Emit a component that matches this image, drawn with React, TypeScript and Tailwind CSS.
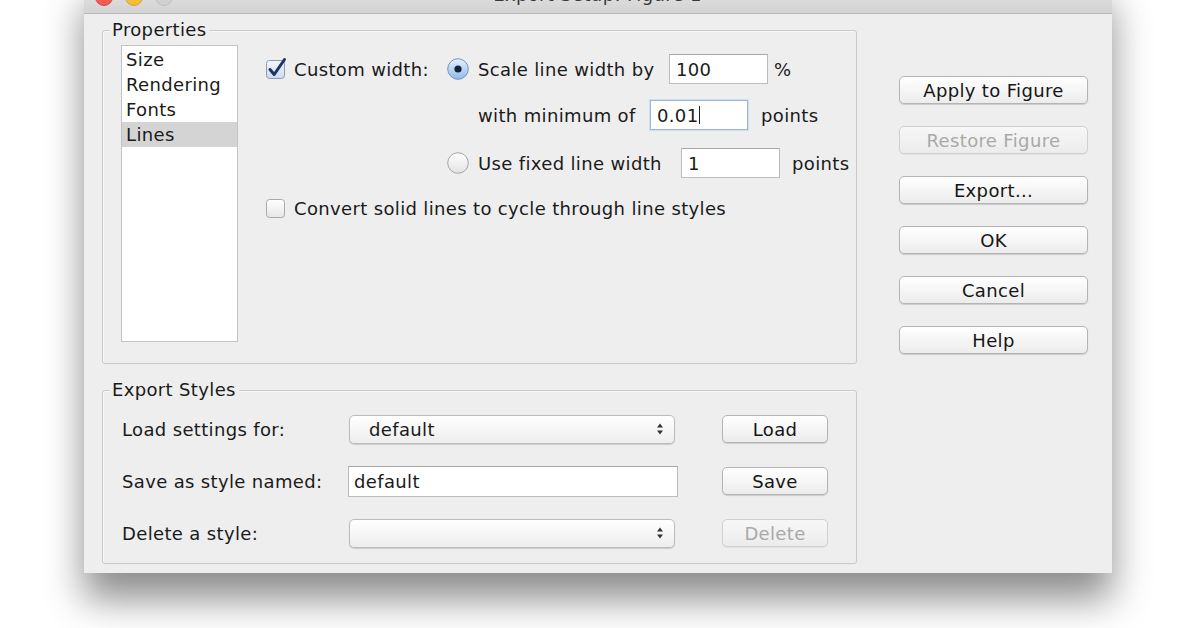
import React from "react";

const font = { fontFamily: '"DejaVu Sans", "Noto Sans", sans-serif' };

function CheckBox({ checked }: { checked: boolean }) {
  return (
    <svg width="24" height="24" viewBox="0 0 24 24" className="shrink-0">
      <defs>
        <linearGradient id={checked ? "cbg1" : "cbg0"} x1="0" y1="0" x2="0" y2="1">
          <stop offset="0" stopColor={checked ? "#f4f8fd" : "#ffffff"} />
          <stop offset="1" stopColor={checked ? "#c9daf0" : "#e6e6e6"} />
        </linearGradient>
      </defs>
      <rect x="2.5" y="3.5" width="18" height="18" rx="3" fill={`url(#${checked ? "cbg1" : "cbg0"})`} stroke={checked ? "#8b9bb4" : "#a9a9a9"} strokeWidth="1" />
      {checked && (
        <path d="M6 12.5 L10.2 17.5 L20.5 2.5" fill="none" stroke="#1d3561" strokeWidth="3" strokeLinecap="round" strokeLinejoin="round" />
      )}
    </svg>
  );
}

function Radio({ checked }: { checked: boolean }) {
  return (
    <svg width="24" height="24" viewBox="0 0 24 24" className="shrink-0">
      <defs>
        <linearGradient id={checked ? "rg1" : "rg0"} x1="0" y1="0" x2="0" y2="1">
          <stop offset="0" stopColor={checked ? "#e4effb" : "#ffffff"} />
          <stop offset="1" stopColor={checked ? "#8fbbe9" : "#e3e3e3"} />
        </linearGradient>
      </defs>
      <circle cx="12" cy="12" r="10.3" fill={`url(#${checked ? "rg1" : "rg0"})`} stroke={checked ? "#7896c0" : "#a6a6a6"} strokeWidth="1" />
      {checked && <circle cx="12" cy="12" r="3.6" fill="#15213a" />}
    </svg>
  );
}

function Field({ value, w, focused, cursor }: { value: string; w: string; focused?: boolean; cursor?: boolean }) {
  return (
    <div
      className={`${w} h-[30px] shrink-0 bg-white flex items-center pl-[6px] border ${
        focused ? "border-[#9fb6d8] shadow-[0_0_0_1px_#cfdcef]" : "border-[#bdbdbd] border-t-[#a8a8a8]"
      }`}
    >
      <span className="text-[#1a1a1a]">{value}</span>
      {cursor && <span className="w-[1px] h-[18px] bg-[#222] ml-[1px]" />}
    </div>
  );
}

function Btn({ label, w, disabled }: { label: string; w: string; disabled?: boolean }) {
  return (
    <div
      className={`${w} h-[28px] rounded-[5px] border flex items-center justify-center bg-gradient-to-b ${
        disabled
          ? "border-[#d0d0d0] from-[#f7f7f7] to-[#ececec] text-[#a9a9a9] shadow-[0_1px_1px_rgba(0,0,0,0.06)]"
          : "border-[#b4b4b4] from-[#ffffff] to-[#ececec] text-[#151515] shadow-[0_1px_1px_rgba(0,0,0,0.15)]"
      }`}
    >
      {label}
    </div>
  );
}

function Select({ value }: { value: string }) {
  return (
    <div className="w-[326px] h-[29px] shrink-0 rounded-[5px] border border-[#bcbcbc] bg-gradient-to-b from-[#ffffff] to-[#ededed] shadow-[0_1px_1px_rgba(0,0,0,0.15)] flex items-center pl-[19px] pr-[10px]">
      <span className="flex-1 text-[#1a1a1a]">{value}</span>
      <svg width="8" height="14" viewBox="0 0 8 14">
        <path d="M1 5.5 L4 1.5 L7 5.5 Z" fill="#333" />
        <path d="M1 8.5 L4 12.5 L7 8.5 Z" fill="#333" />
      </svg>
    </div>
  );
}

function GroupTitle({ text }: { text: string }) {
  return (
    <div className="-mt-[12px] ml-[6px] h-[22px] leading-[22px] w-fit px-[3px] bg-[#eeeeee] text-[#1a1a1a]">{text}</div>
  );
}

export default function App() {
  return (
    <div className="w-[1196px] h-[628px] bg-white overflow-hidden text-[18px] tracking-[0.35px]" style={font}>
      <div className="ml-[84px] w-[1028px] -mt-[22px] bg-[#eeeeee] shadow-[0_26px_36px_rgba(0,0,0,0.45)]">
        {/* Title bar */}
        <div className="h-[36px] bg-gradient-to-b from-[#e8e8e8] to-[#d3d3d3] border-b border-[#b9b9b9] flex items-center px-[10px]">
          <div className="flex items-center gap-[12px] ml-[1px] mt-[2px]">
            <div className="w-[18px] h-[18px] rounded-full bg-[#f25a52] border border-[#d8453e]" />
            <div className="w-[18px] h-[18px] rounded-full bg-[#f6bc3c] border border-[#dca032]" />
            <div className="w-[18px] h-[18px] rounded-full bg-[#d0d0d0] border border-[#bdbdbd]" />
          </div>
          <div className="flex-1 text-center text-[#3a3a3a] pr-[80px] -mt-[2px]">Export Setup: Figure 1</div>
        </div>

        {/* Content */}
        <div className="flex pl-[18px] pt-[16px] pb-[9px]">
          {/* Left column */}
          <div className="w-[755px] shrink-0">
            {/* Properties group */}
            <div className="h-[334px] border border-[#c9c9c9] rounded-[3px] shadow-[inset_1px_1px_0_#f8f8f8]">
              <GroupTitle text="Properties" />
              <div className="flex">
                <div className="ml-[18px] mt-[4px] w-[117px] h-[297px] bg-white border border-[#c4c4c4] pt-[1px] leading-[25px] text-[#1a1a1a]">
                  <div className="pl-[4px]">Size</div>
                  <div className="pl-[4px]">Rendering</div>
                  <div className="pl-[4px]">Fonts</div>
                  <div className="pl-[4px] bg-[#d4d4d4]">Lines</div>
                </div>
                <div className="ml-[26px] mt-[13px] text-[#1a1a1a]">
                  <div className="flex items-center h-[30px]">
                    <div className="w-[182px] flex items-center gap-[6px] shrink-0">
                      <CheckBox checked />
                      <span>Custom width:</span>
                    </div>
                    <Radio checked />
                    <span className="ml-[8px] w-[191px] shrink-0">Scale line width by</span>
                    <Field value="100" w="w-[99px]" />
                    <span className="ml-[6px]">%</span>
                  </div>
                  <div className="flex items-center h-[30px] mt-[16px]">
                    <span className="ml-[214px] w-[172px] shrink-0">with minimum of</span>
                    <Field value="0.01" w="w-[98px]" focused cursor />
                    <span className="ml-[13px]">points</span>
                  </div>
                  <div className="flex items-center h-[30px] mt-[18px]">
                    <div className="ml-[182px]">
                      <Radio checked={false} />
                    </div>
                    <span className="ml-[8px] w-[203px] shrink-0">Use fixed line width</span>
                    <Field value="1" w="w-[99px]" />
                    <span className="ml-[12px]">points</span>
                  </div>
                  <div className="flex items-center h-[30px] mt-[15px] gap-[6px]">
                    <CheckBox checked={false} />
                    <span>Convert solid lines to cycle through line styles</span>
                  </div>
                </div>
              </div>
            </div>

            {/* Export Styles group */}
            <div className="mt-[26px] h-[174px] border border-[#c9c9c9] rounded-[3px] shadow-[inset_1px_1px_0_#f8f8f8]">
              <GroupTitle text="Export Styles" />
              <div className="pl-[19px] text-[#1a1a1a]">
                <div className="flex items-center h-[30px] mt-[13px]">
                  <span className="w-[227px] shrink-0">Load settings for:</span>
                  <Select value="default" />
                  <div className="ml-[47px]">
                    <Btn label="Load" w="w-[106px]" />
                  </div>
                </div>
                <div className="flex items-center h-[30px] mt-[22px]">
                  <span className="w-[226px] shrink-0">Save as style named:</span>
                  <div className="w-[330px] h-[31px] bg-white border border-[#bcbcbc] border-t-[#a6a6a6] flex items-center pl-[5px]">
                    default
                  </div>
                  <div className="ml-[44px]">
                    <Btn label="Save" w="w-[106px]" />
                  </div>
                </div>
                <div className="flex items-center h-[30px] mt-[22px]">
                  <span className="w-[227px] shrink-0">Delete a style:</span>
                  <Select value="" />
                  <div className="ml-[47px]">
                    <Btn label="Delete" w="w-[106px]" disabled />
                  </div>
                </div>
              </div>
            </div>
          </div>

          {/* Right buttons */}
          <div className="ml-[42px] mt-[46px] flex flex-col gap-[22px]">
            <Btn label="Apply to Figure" w="w-[189px]" />
            <Btn label="Restore Figure" w="w-[189px]" disabled />
            <Btn label="Export..." w="w-[189px]" />
            <Btn label="OK" w="w-[189px]" />
            <Btn label="Cancel" w="w-[189px]" />
            <Btn label="Help" w="w-[189px]" />
          </div>
        </div>
      </div>
    </div>
  );
}
